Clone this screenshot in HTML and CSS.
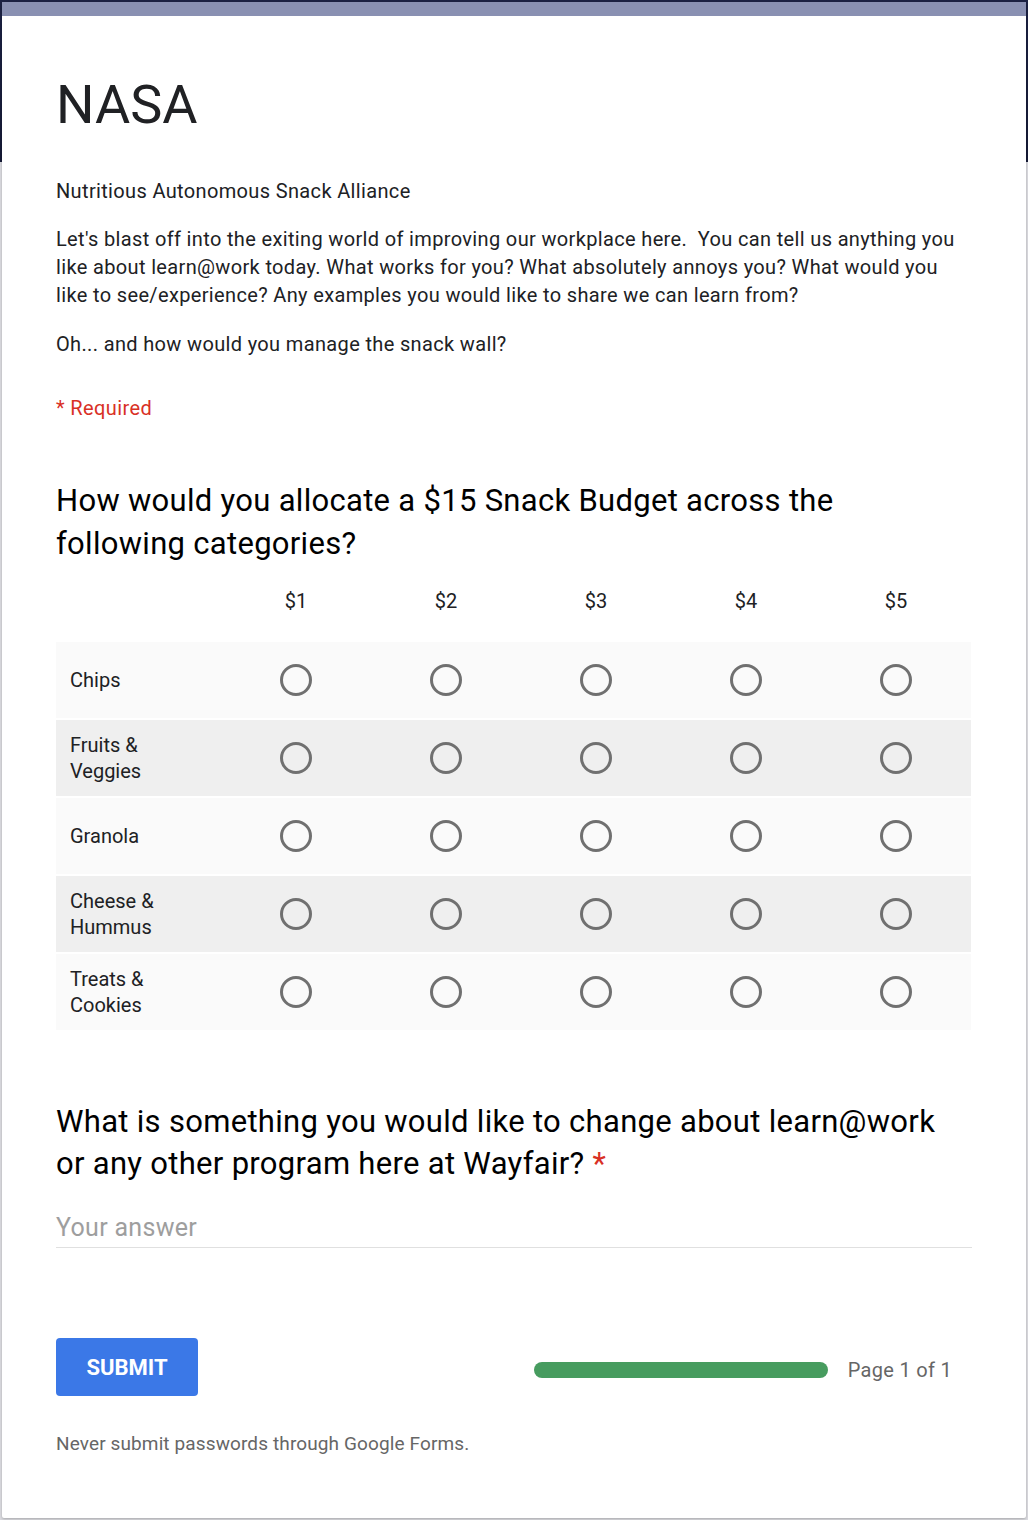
FILE: index.html
```html
<!DOCTYPE html>
<html lang="en">
<head>
<meta charset="utf-8">
<title>NASA</title>
<link rel="stylesheet" href="styles.css">
</head>
<body>
<div class="card">
  <div class="topbar"></div>
  <div class="content">
    <h1 class="title">NASA</h1>
    <p class="desc subtitle">Nutritious Autonomous Snack Alliance</p>
    <p class="desc intro">Let's blast off into the exiting world of improving our workplace here.&nbsp; You can tell us anything you like about learn@work today. What works for you? What absolutely annoys you? What would you like to see/experience? Any examples you would like to share we can learn from?</p>
    <p class="desc outro">Oh... and how would you manage the snack wall?</p>
    <div class="required">* Required</div>

    <h2 class="qtitle q1">How would you allocate a $15 Snack Budget across the following categories?</h2>
    <div class="grid">
      <div class="grow head">
        <div class="label"></div>
        <div class="cell">$1</div><div class="cell">$2</div><div class="cell">$3</div><div class="cell">$4</div><div class="cell">$5</div>
      </div>
      <div class="grow odd">
        <div class="label">Chips</div>
        <div class="cell"><span class="radio"></span></div><div class="cell"><span class="radio"></span></div><div class="cell"><span class="radio"></span></div><div class="cell"><span class="radio"></span></div><div class="cell"><span class="radio"></span></div>
      </div>
      <div class="grow even">
        <div class="label">Fruits &amp; Veggies</div>
        <div class="cell"><span class="radio"></span></div><div class="cell"><span class="radio"></span></div><div class="cell"><span class="radio"></span></div><div class="cell"><span class="radio"></span></div><div class="cell"><span class="radio"></span></div>
      </div>
      <div class="grow odd">
        <div class="label">Granola</div>
        <div class="cell"><span class="radio"></span></div><div class="cell"><span class="radio"></span></div><div class="cell"><span class="radio"></span></div><div class="cell"><span class="radio"></span></div><div class="cell"><span class="radio"></span></div>
      </div>
      <div class="grow even">
        <div class="label">Cheese &amp; Hummus</div>
        <div class="cell"><span class="radio"></span></div><div class="cell"><span class="radio"></span></div><div class="cell"><span class="radio"></span></div><div class="cell"><span class="radio"></span></div><div class="cell"><span class="radio"></span></div>
      </div>
      <div class="grow odd">
        <div class="label">Treats &amp; Cookies</div>
        <div class="cell"><span class="radio"></span></div><div class="cell"><span class="radio"></span></div><div class="cell"><span class="radio"></span></div><div class="cell"><span class="radio"></span></div><div class="cell"><span class="radio"></span></div>
      </div>
    </div>

    <h2 class="qtitle q2">What is something you would like to change about learn@work or any other program here at Wayfair? <span class="star">*</span></h2>
    <div class="answer">Your answer</div>

    <div class="actions">
      <button class="submit">SUBMIT</button>
      <div class="progress">
        <div class="bar"></div>
        <span class="pagetext">Page 1 of 1</span>
      </div>
    </div>
    <div class="footer">Never submit passwords through Google Forms.</div>
  </div>
</div>
</body>
</html>
```

FILE: styles.css
```css
html, body {
  margin: 0;
  padding: 0;
}
body {
  width: 1028px;
  min-height: 1520px;
  font-family: Roboto, "Liberation Sans", Arial, sans-serif;
  color: #202124;
  background:
    radial-gradient(circle at 12% 30%, rgba(255,255,255,0.5) 0 1px, transparent 2px),
    radial-gradient(circle at 48% 10%, rgba(255,255,255,0.4) 0 1px, transparent 2px),
    radial-gradient(circle at 73% 40%, rgba(255,255,255,0.4) 0 1px, transparent 2px),
    linear-gradient(#1c2244, #151a36) top left / 100% 162px no-repeat,
    #dcdce1;
  padding-top: 2px;
  box-sizing: border-box;
}
.card {
  width: 1024px;
  margin: 0 2px;
  background: #fff;
  box-shadow: 0 1px 3px rgba(0,0,0,0.25);
  border-radius: 0 0 2px 2px;
}
.topbar {
  height: 14px;
  background: #8990b2;
}
.content {
  padding: 55px 55px 60px 54px;
}
.title {
  margin: 0;
  font-size: 54px;
  line-height: 68px;
  font-weight: 400;
  color: #202124;
}
.desc {
  margin: 20px 0 0;
  font-size: 20px;
  line-height: 28px;
  letter-spacing: 0.35px;
}
.desc.subtitle {
  margin-top: 38px;
}
.desc.intro {
  margin-top: 20px;
}
.desc.outro {
  margin-top: 21px;
}
.required {
  margin-top: 36px;
  font-size: 20px;
  line-height: 28px;
  letter-spacing: 0.4px;
  color: #d93025;
}
.qtitle {
  margin: 0;
  width: 900px;
  font-size: 31px;
  line-height: 43px;
  letter-spacing: 0.3px;
  font-weight: 400;
  color: #000;
}
.q1 {
  margin-top: 57px;
}
.q2 {
  margin-top: 71px;
  line-height: 42px;
}
.star {
  color: #d93025;
}
.grid {
  margin-top: 20px;
  display: flex;
  flex-direction: column;
  gap: 2px;
}
.grow {
  display: grid;
  grid-template-columns: 165px repeat(5, 150px);
  height: 76px;
  align-items: center;
}
.grow.head {
  height: 30px;
  padding-top: 1px;
  margin-bottom: 24px;
  font-size: 20px;
  line-height: 30px;
}
.odd { background: #fafafa; }
.even { background: #efefef; }
.label {
  padding: 0 14px;
  font-size: 20px;
  line-height: 26px;
}
.cell {
  display: flex;
  justify-content: center;
  align-items: center;
}
.radio {
  width: 26px;
  height: 26px;
  border: 3px solid #707070;
  border-radius: 50%;
}
.answer {
  margin-top: 28px;
  font-size: 25px;
  line-height: 30px;
  letter-spacing: 0.3px;
  color: #9e9e9e;
  padding-bottom: 4px;
  border-bottom: 1px solid #e0e0e0;
  width: 916px;
}
.actions {
  margin-top: 90px;
  display: flex;
  align-items: center;
  justify-content: space-between;
}
.submit {
  width: 142px;
  height: 58px;
  border: none;
  border-radius: 4px;
  background: #3b78e7;
  color: #fff;
  font-family: Roboto, "Liberation Sans", Arial, sans-serif;
  font-size: 22px;
  font-weight: 700;
  letter-spacing: 0;
  padding: 0;
}
.progress {
  display: flex;
  align-items: center;
  gap: 20px;
  padding-right: 19px;
  margin-top: 6px;
}
.bar {
  width: 294px;
  height: 16px;
  border-radius: 8px;
  background: #479c5f;
}
.pagetext {
  font-size: 20px;
  line-height: 28px;
  letter-spacing: 0.3px;
  color: #666;
}
.footer {
  margin-top: 34px;
  font-size: 19px;
  line-height: 28px;
  letter-spacing: 0.12px;
  color: #666;
}
```
